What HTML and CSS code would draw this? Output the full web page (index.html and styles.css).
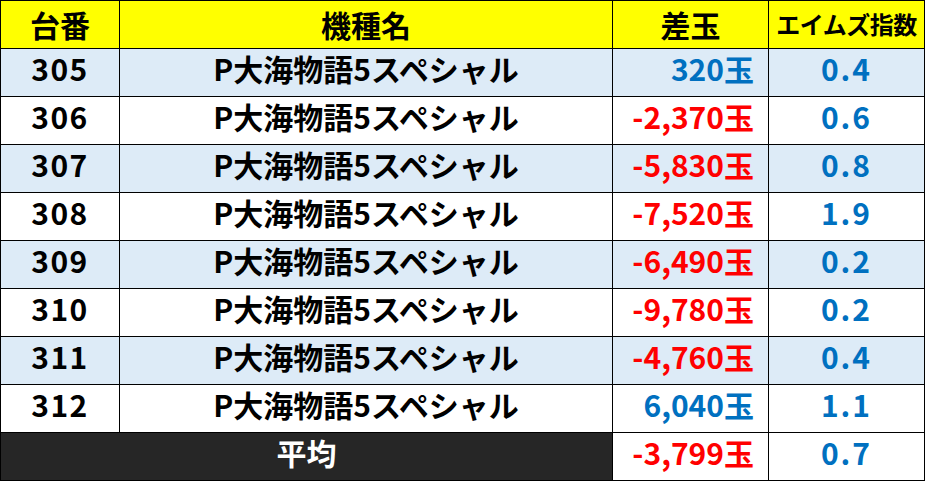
FILE: index.html
```html
<!DOCTYPE html>
<html lang="ja">
<head>
<meta charset="utf-8">
<link rel="stylesheet" href="styles.css">
</head>
<body>
<table class="data">
  <colgroup>
    <col class="c-no">
    <col class="c-name">
    <col class="c-diff">
    <col class="c-idx">
  </colgroup>
  <thead>
    <tr class="head">
      <th>台番</th>
      <th>機種名</th>
      <th>差玉</th>
      <th class="small">エイムズ指数</th>
    </tr>
  </thead>
  <tbody>
    <tr class="alt"><td class="no">305</td><td class="name">P大海物語5スペシャル</td><td class="diff plus">320玉</td><td class="idx">0.4</td></tr>
    <tr><td class="no">306</td><td class="name">P大海物語5スペシャル</td><td class="diff minus">-2,370玉</td><td class="idx">0.6</td></tr>
    <tr class="alt"><td class="no">307</td><td class="name">P大海物語5スペシャル</td><td class="diff minus">-5,830玉</td><td class="idx">0.8</td></tr>
    <tr><td class="no">308</td><td class="name">P大海物語5スペシャル</td><td class="diff minus">-7,520玉</td><td class="idx">1.9</td></tr>
    <tr class="alt"><td class="no">309</td><td class="name">P大海物語5スペシャル</td><td class="diff minus">-6,490玉</td><td class="idx">0.2</td></tr>
    <tr><td class="no">310</td><td class="name">P大海物語5スペシャル</td><td class="diff minus">-9,780玉</td><td class="idx">0.2</td></tr>
    <tr class="alt"><td class="no">311</td><td class="name">P大海物語5スペシャル</td><td class="diff minus">-4,760玉</td><td class="idx">0.4</td></tr>
    <tr><td class="no">312</td><td class="name">P大海物語5スペシャル</td><td class="diff plus">6,040玉</td><td class="idx">1.1</td></tr>
    <tr class="avg"><td class="avg-label" colspan="2">平均</td><td class="diff minus">-3,799玉</td><td class="idx">0.7</td></tr>
  </tbody>
</table>
</body>
</html>
```

FILE: styles.css
```css
html, body {
  margin: 0;
  padding: 0;
  background: #ffffff;
}

.data {
  border-collapse: collapse;
  table-layout: fixed;
  width: 924px;
  font-family: "Noto Sans CJK JP", sans-serif;
  font-weight: 700;
  font-size: 30px;
  color: #000000;
}

.c-no { width: 119px; }
.c-name { width: 493px; }
.c-diff { width: 156px; }
.c-idx { width: 156px; }

.data th,
.data td {
  border: 1px solid #000000;
  height: 48px;
  padding: 0 0 8px 0;
  box-sizing: border-box;
  line-height: 39px;
  text-align: center;
  white-space: nowrap;
}

.head th {
  background: #ffff00;
  font-weight: 700;
  padding: 0 0 2px 0;
  line-height: 44px;
}

.head th.small {
  font-size: 24px;
  letter-spacing: -0.5px;
}

.alt td {
  background: #ddebf7;
}

.no {
  letter-spacing: 1.5px;
}

.diff {
  text-align: right !important;
  padding-right: 14px !important;
}

.plus { color: #0070c0; }
.minus { color: #ff0000; }

.idx {
  color: #0070c0;
  letter-spacing: 2px;
}

.avg-label {
  background: #262626;
  color: #ffffff;
}
```
